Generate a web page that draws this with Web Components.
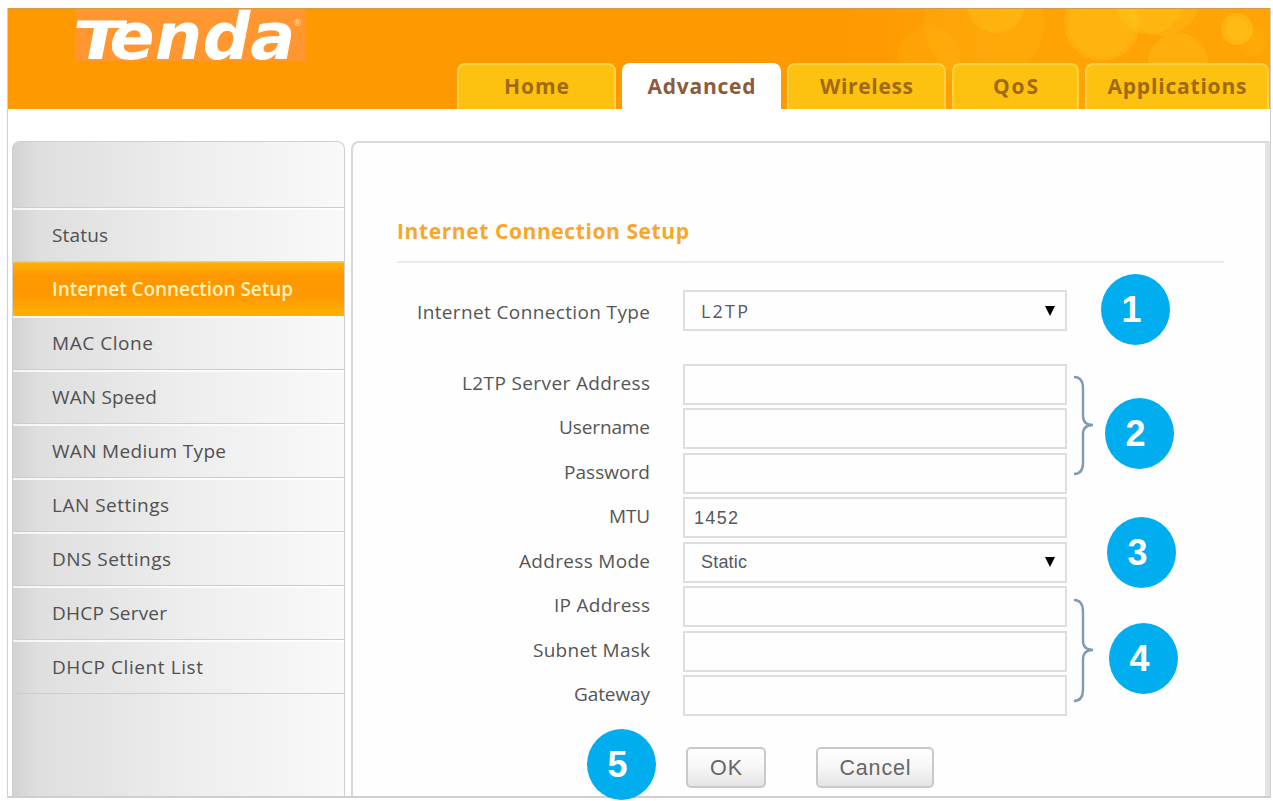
<!DOCTYPE html>
<html lang="en">
<head>
<meta charset="utf-8">
<title>Tenda</title>
<style>
    body {
        margin: 0;
        background: #fff;
        font-family: "Open Sans", "Noto Sans", sans-serif;
    }
</style>
</head>
<body>
<router-app></router-app>
<script>
// One line of text, spaced out to an exact width
class FitText extends HTMLElement {
    constructor() {
        super();
        this.attachShadow({ mode: "open" });
        this.shadowRoot.innerHTML = `
<style>
    :host { display: inline-block; white-space: nowrap; }
    span { display: inline-block; }
</style>
<span><slot></slot></span>`;
    }

    connectedCallback() {
        const span = this.shadowRoot.querySelector("span");
        const width = Number(this.getAttribute("width"));
        const spacing = (width - span.getBoundingClientRect().width) / (this.textContent.length - 1);
        span.style.letterSpacing = `${spacing}px`;
        span.style.marginRight = `${-spacing}px`;
    }
}

class RouterLogo extends HTMLElement {
    constructor() {
        super();
        this.attachShadow({ mode: "open" });
        this.shadowRoot.innerHTML = `
<style>
    :host { display: block; width: 230px; height: 52px; background: #ff962f; }
    svg { display: block; overflow: visible; }
    text { font-family: "DejaVu Sans", sans-serif; font-weight: 700; fill: #fff; }
    .reg { font-size: 9px; font-weight: 400; fill: #ffd9a0; }
</style>
<svg width="230" height="52" viewBox="0 0 230 52">
    <g transform="translate(0 50) skewX(-11)">
        <text x="-5" y="0" font-size="53" textLength="50" lengthAdjust="spacingAndGlyphs">T</text>
        <text x="31" y="0" font-size="65" textLength="186" lengthAdjust="spacingAndGlyphs">enda</text>
    </g>
    <text class="reg" x="218" y="17">®</text>
</svg>`;
    }
}

class RouterTab extends HTMLElement {
    constructor() {
        super();
        this.attachShadow({ mode: "open" });
        this.shadowRoot.innerHTML = `
<style>
    :host {
        box-sizing: border-box;
        display: flex;
        align-items: center;
        justify-content: center;
        height: 46px;
        background: #fdc20f;
        border: 2px solid #ffd044;
        border-bottom: 0;
        border-radius: 8px 8px 0 0;
        color: #a06a14;
        font-size: 21px;
        font-weight: 700;
        line-height: 42px;
        padding-bottom: 2px;
    }

    :host([active]) {
        background: #fff;
        border-color: #fff;
        color: #8d5a3c;
    }
</style>
<slot></slot>`;
    }
}

class RouterHeader extends HTMLElement {
    constructor() {
        super();
        this.attachShadow({ mode: "open" });
        this.shadowRoot.innerHTML = `
<style>
    :host {
        box-sizing: border-box;
        display: flex;
        justify-content: space-between;
        height: 101px;
        padding-left: 67px;
        padding-right: 1px;
        border-top: 1px solid #d99a45;
        background: #ff9900;
        position: relative;
    }

    .bubbles { position: absolute; top: 0; right: 0; }
    router-logo { position: relative; }

    .tabs {
        display: flex;
        align-items: flex-end;
        gap: 6px;
        position: relative;
    }
</style>
<svg class="bubbles" width="423" height="100" viewBox="848 9 423 100">
    <defs>
        <linearGradient id="glow">
            <stop offset="0" stop-color="#ff9900"/>
            <stop offset=".4" stop-color="#ffa305"/>
            <stop offset="1" stop-color="#ffa404"/>
        </linearGradient>
    </defs>
    <rect x="848" y="9" width="423" height="101" fill="url(#glow)"/>
    <g fill="#ffcd20" fill-opacity=".28">
        <circle cx="930" cy="58" r="31" fill-opacity=".12"/>
        <circle cx="985" cy="22" r="60" fill-opacity=".14"/>
        <circle cx="997" cy="4" r="29"/>
        <circle cx="1103" cy="23" r="38"/>
        <circle cx="1103" cy="23" r="34" fill-opacity=".18"/>
        <circle cx="1150" cy="0" r="34"/>
        <circle cx="1163" cy="-2" r="38" fill-opacity=".25"/>
        <circle cx="1179" cy="63" r="30"/>
        <circle cx="1238" cy="29" r="16" fill-opacity=".4"/>
        <circle cx="1238" cy="29" r="11"/>
        <circle cx="1254" cy="42" r="14" fill-opacity=".12"/>
    </g>
</svg>
<router-logo></router-logo>
<div class="tabs">
    <router-tab style="width: 159px"><fit-text width="65">Home</fit-text></router-tab>
    <router-tab style="width: 159px" active><fit-text width="108">Advanced</fit-text></router-tab>
    <router-tab style="width: 159px"><fit-text width="93">Wireless</fit-text></router-tab>
    <router-tab style="width: 127px"><fit-text width="45">QoS</fit-text></router-tab>
    <router-tab style="width: 184px"><fit-text width="139">Applications</fit-text></router-tab>
</div>`;
    }
}

class MenuItem extends HTMLElement {
    constructor() {
        super();
        this.attachShadow({ mode: "open" });
        this.shadowRoot.innerHTML = `
<style>
    :host {
        box-sizing: border-box;
        display: block;
        height: 54px;
        padding-left: 39px;
        border-top: 2px solid #ffffffc0;
        border-bottom: 1px solid #cdcdcd;
        color: #505050;
        font-size: 19px;
        line-height: 51px;
    }

    :host([active]) {
        background: linear-gradient(#ffb000, #ff9800 25%, #ff9900 65%, #ffb200);
        border-top: 1px solid #f5bd45;
        border-bottom-color: #d9b35a;
        color: #fff2b8;
        font-weight: 600;
        line-height: 53px;
    }
</style>
<slot></slot>`;
    }
}

class SideMenu extends HTMLElement {
    constructor() {
        super();
        this.attachShadow({ mode: "open" });
        this.shadowRoot.innerHTML = `
<style>
    :host {
        box-sizing: border-box;
        display: block;
        width: 333px;
        padding-top: 65px;
        border: 1px solid #cfcfcf;
        border-bottom: 0;
        border-radius: 8px 8px 0 0;
        background: linear-gradient(90deg, #d3d3d3, #dfdfdf 8%, #e4e4e4 25%, #eeeeee 55%, #f9f9f9);
    }

    .rule { height: 1px; background: #cdcdcd; }
</style>
<div class="rule"></div>
<menu-item><fit-text width="56">Status</fit-text></menu-item>
<menu-item active><fit-text width="241">Internet Connection Setup</fit-text></menu-item>
<menu-item><fit-text width="101">MAC Clone</fit-text></menu-item>
<menu-item><fit-text width="105">WAN Speed</fit-text></menu-item>
<menu-item><fit-text width="174">WAN Medium Type</fit-text></menu-item>
<menu-item><fit-text width="117">LAN Settings</fit-text></menu-item>
<menu-item><fit-text width="119">DNS Settings</fit-text></menu-item>
<menu-item><fit-text width="115">DHCP Server</fit-text></menu-item>
<menu-item><fit-text width="151">DHCP Client List</fit-text></menu-item>`;
    }
}

class FormRow extends HTMLElement {
    constructor() {
        super();
        this.attachShadow({ mode: "open" });
        this.shadowRoot.innerHTML = `
<style>
    :host {
        display: grid;
        grid-template-columns: 297px 384px;
        column-gap: 33px;
        height: 41px;
        font-size: 19px;
        line-height: 38px;
        color: #555;
    }

    .label { text-align: right; }

    .field {
        box-sizing: border-box;
        display: flex;
        align-items: center;
        justify-content: space-between;
        height: 41px;
        padding: 0 10px 0 16px;
        border: 2px solid #dedede;
        font-family: "Liberation Sans", Arial, sans-serif;
        font-size: 18px;
        color: #555864;
    }

    svg { display: none; }
    :host([select]) svg { display: block; }
</style>
<div class="label"><slot name="label"></slot></div>
<div class="field">
    <slot></slot>
    <svg width="10" height="10" viewBox="0 0 10 10"><path d="M0 0h10L5 10z" fill="#000"/></svg>
</div>`;
    }
}

class PushButton extends HTMLElement {
    constructor() {
        super();
        this.attachShadow({ mode: "open" });
        this.shadowRoot.innerHTML = `
<style>
    :host {
        box-sizing: border-box;
        display: block;
        height: 41px;
        border: 2px solid #c9c9c9;
        border-radius: 5px;
        background: linear-gradient(#fff, #f6f6f6 50%, #e4e4e4);
        color: #666;
        font: 21.5px/39px "Liberation Sans", Arial, sans-serif;
        text-align: center;
    }
</style>
<slot></slot>`;
    }
}

// Numbered callout that lies over the screen
class StepBadge extends HTMLElement {
    constructor() {
        super();
        this.attachShadow({ mode: "open" });
        this.shadowRoot.innerHTML = `
<style>
    :host {
        position: absolute;
        box-sizing: border-box;
        width: 69px;
        height: 71px;
        padding-right: 8px;
        border-radius: 50%;
        background: #00aeef;
        color: #fff;
        font: 700 36px/71px "Liberation Sans", Arial, sans-serif;
        text-align: center;
    }
</style>
<slot></slot>`;
    }
}

class CurlyBrace extends HTMLElement {
    constructor() {
        super();
        this.attachShadow({ mode: "open" });
        this.shadowRoot.innerHTML = `
<style>
    :host { position: absolute; width: 22px; }
    svg { display: block; width: 100%; height: 100%; }
</style>
<svg viewBox="0 0 22 101" preserveAspectRatio="none">
    <path d="M1 2Q10 2 10 13V41Q10 50 20 50Q10 50 10 59V88Q10 99 1 99" fill="none" stroke="#7f9ab8" stroke-width="2.4"/>
</svg>`;
    }
}

class SetupPanel extends HTMLElement {
    constructor() {
        super();
        this.attachShadow({ mode: "open" });
        this.shadowRoot.innerHTML = `
<style>
    :host {
        box-sizing: border-box;
        display: block;
        flex: 1;
        border: 2px solid #d8d8d8;
        border-right: 5px solid #e3e3e3;
        border-bottom: 0;
        border-radius: 8px 0 0 0;
        background: #fefefe;
    }

    h1 {
        width: 827px;
        height: 55px;
        margin: 63px 0 0 44px;
        border-bottom: 2px solid #ebebeb;
        color: #f8a62c;
        font-size: 21px;
        font-weight: 700;
        line-height: 50px;
    }

    .fields {
        display: grid;
        row-gap: 3.5px;
        margin-top: 27px;
    }

    .first { margin-bottom: 29px; }
    .first [slot] { padding-top: 3px; }
    .humanist { font-family: "Open Sans", "Noto Sans", sans-serif; }

    .actions {
        display: flex;
        gap: 50px;
        margin: 31px 0 0 333px;
    }
</style>
<h1><fit-text width="292">Internet Connection Setup</fit-text></h1>
<div class="fields">
    <form-row class="first" select><fit-text slot="label" width="233">Internet Connection Type</fit-text><fit-text class="humanist" width="47">L2TP</fit-text></form-row>
    <form-row><fit-text slot="label" width="188">L2TP Server Address</fit-text></form-row>
    <form-row><fit-text slot="label" width="91">Username</fit-text></form-row>
    <form-row><fit-text slot="label" width="86">Password</fit-text></form-row>
    <form-row><fit-text slot="label" width="41">MTU</fit-text><fit-text width="44" style="margin-left: -7px">1452</fit-text></form-row>
    <form-row select><fit-text slot="label" width="131">Address Mode</fit-text><fit-text width="46">Static</fit-text></form-row>
    <form-row><fit-text slot="label" width="96">IP Address</fit-text></form-row>
    <form-row><fit-text slot="label" width="117">Subnet Mask</fit-text></form-row>
    <form-row><fit-text slot="label" width="76">Gateway</fit-text></form-row>
</div>
<div class="actions">
    <push-button style="width: 80px"><fit-text width="32">OK</fit-text></push-button>
    <push-button style="width: 118px"><fit-text width="71">Cancel</fit-text></push-button>
</div>`;
    }
}

class RouterApp extends HTMLElement {
    constructor() {
        super();
        this.attachShadow({ mode: "open" });
        this.shadowRoot.innerHTML = `
<style>
    :host {
        display: block;
        position: relative;
        box-sizing: border-box;
        height: 801px;
        padding: 8px 2px 3px 7px;
    }

    .frame {
        box-sizing: border-box;
        display: flex;
        flex-direction: column;
        height: 790px;
        border: 1px solid #cfcfcf;
        border-bottom-width: 2px;
        border-top: 0;
    }

    .content {
        display: flex;
        gap: 6px;
        flex: 1;
        min-height: 0;
        padding: 32px 0 0 4px;
    }
</style>
<div class="frame">
    <router-header></router-header>
    <div class="content">
        <side-menu></side-menu>
        <setup-panel></setup-panel>
    </div>
</div>
<curly-brace style="left: 1073px; top: 375px; height: 101px"></curly-brace>
<curly-brace style="left: 1073px; top: 598px; height: 105px"></curly-brace>
<step-badge style="left: 1101px; top: 274px">1</step-badge>
<step-badge style="left: 1105px; top: 398px">2</step-badge>
<step-badge style="left: 1107px; top: 517px">3</step-badge>
<step-badge style="left: 1109px; top: 623px">4</step-badge>
<step-badge style="left: 587px; top: 729px">5</step-badge>`;
    }
}

customElements.define("fit-text", FitText);
customElements.define("router-logo", RouterLogo);
customElements.define("router-tab", RouterTab);
customElements.define("menu-item", MenuItem);
customElements.define("form-row", FormRow);
customElements.define("push-button", PushButton);
customElements.define("step-badge", StepBadge);
customElements.define("curly-brace", CurlyBrace);
customElements.define("router-header", RouterHeader);
customElements.define("side-menu", SideMenu);
customElements.define("setup-panel", SetupPanel);
customElements.define("router-app", RouterApp);
</script>
</body>
</html>
